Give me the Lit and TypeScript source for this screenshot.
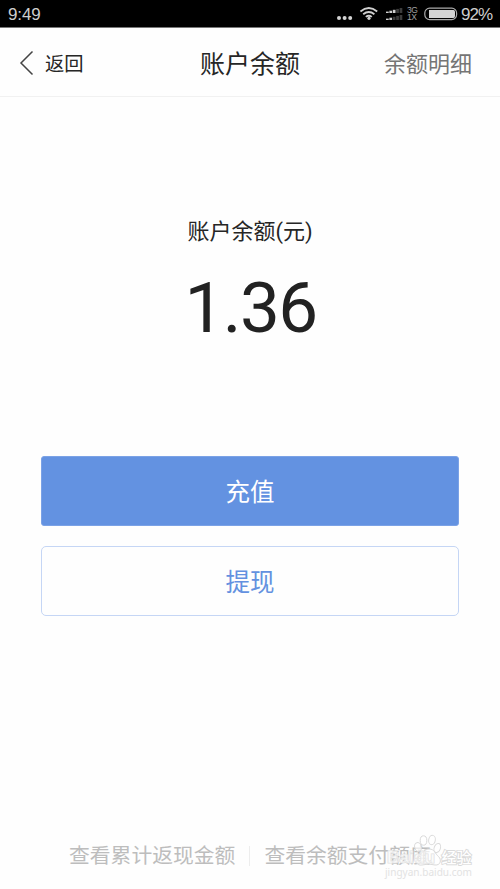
import { LitElement, html, css, svg } from "lit";
import { customElement } from "lit/decorators.js";

@customElement("status-bar")
class StatusBar extends LitElement {
  static styles = css`
    :host {
      display: block;
      height: 27px;
      background: #000;
      border-bottom: 1px solid #777;
      color: #cecece;
    }
    .row { display: flex; align-items: center; height: 28px; padding: 0 8px; }
    .time { font: 17px/28px "Liberation Sans", sans-serif; letter-spacing: -0.1px; flex: 1; position: relative; top: 1px; }
    svg { display: block; flex: none; }
    .pct { font: 17px/28px "Liberation Sans", sans-serif; letter-spacing: -0.9px; width: 31px; margin-left: 3px; white-space: nowrap; position: relative; top: 1px; }
    .net { display: flex; flex-direction: column; font: 8.5px/7px "Liberation Sans", sans-serif; letter-spacing: -0.4px; width: 11px; margin: 0 6px 0 3px; color: #a0a0a0; }
  `;
  render() {
    const bars = (y: number, lit: number) =>
      [0, 1, 2, 3, 4].map((i) => svg`<rect x=${1 + i * 3.4} y=${y - 1.4 - i * 0.9} width="2.7" height=${1.4 + i * 0.9} fill=${i < lit ? "#d0d0d0" : "#3c3c3c"}/>`);
    return html`<div class="row">
      <span class="time">9:49</span>
      <svg width="68" height="28" viewBox="0 0 68 28">
        <g fill="#d4d4d4"><circle cx="3" cy="18" r="2"/><circle cx="8.6" cy="18" r="2"/><circle cx="14.2" cy="18" r="2"/></g>
        <path d="M24.4 11.5Q32.8 4.6 41.2 11.5M27.2 14.3Q32.8 9.8 38.4 14.3M29.8 16.9Q32.8 14.6 35.8 16.9" fill="none" stroke="#d0d0d0" stroke-width="1.8"/>
        <circle cx="33" cy="18.3" r="1.6" fill="#d4d4d4"/>
        <g transform="translate(49)">${bars(13, 3)}${bars(20, 2)}</g>
      </svg>
      <div class="net"><span>3G</span><span>1X</span></div>
      <svg width="34" height="28" viewBox="0 0 34 28">
        <rect x=".8" y="8.2" width="31.8" height="11.4" rx="4.8" fill="none" stroke="#aaa" stroke-width="1.2"/>
        <path d="M5 10H29.5Q31 10 31 11.8V16Q31 17.9 29.5 17.9H5Z" fill="#d4d4d4"/>
      </svg>
      <span class="pct">92%</span>
    </div>`;
  }
}

@customElement("site-mark")
class SiteMark extends LitElement {
  static styles = css`
    :host { display: block; width: 94px; height: 52px; }
    svg { display: block; }
    text { paint-order: stroke; }
    .brand { font: bold 17px "Liberation Sans", sans-serif; }
    .cn { font: 500 15px "Noto Sans CJK SC", sans-serif; }
    .url { font: 11.5px "Noto Sans", sans-serif; }
  `;
  render() {
    return html`<svg width="94" height="52" viewBox="0 0 94 52">
      <g fill="#fff" fill-opacity=".7" stroke="#dadada" stroke-width="1">
        <path d="M45 16C39 16 38 21 34.5 24C30.5 28 33 33 38 32Q45 30 51 32C56.5 32.5 58 27 54.5 23.5C51 21 51 16 45 16Z"/>
        <ellipse cx="34" cy="14" rx="3.3" ry="4.5" transform="rotate(-15 34 14)"/>
        <ellipse cx="39.5" cy="7.5" rx="3.3" ry="4.7"/>
        <ellipse cx="48" cy="7" rx="3.3" ry="4.7" transform="rotate(10 48 7)"/>
        <ellipse cx="53.3" cy="15" rx="3.1" ry="4.7" transform="rotate(20 53.3 15)"/>
        <text class="brand" x="3" y="30" textLength="48" lengthAdjust="spacingAndGlyphs" stroke="#e2e2e2" stroke-width="1.2" fill-opacity=".5">Baidu</text>
        <text class="cn" x="57.5" y="30" textLength="30" fill-opacity="1" stroke-width="1.8">经验</text>
      </g>
      <text class="url" x="1" y="43" textLength="87" lengthAdjust="spacingAndGlyphs" fill="#e2e2e2">jingyan.baidu.com</text>
    </svg>`;
  }
}

@customElement("app-root")
class AppRoot extends LitElement {
  static styles = css`
    :host {
      display: flex;
      flex-direction: column;
      height: 889px;
      width: 500px;
      box-sizing: border-box;
      overflow: hidden;
      position: relative;
      background: #fefefe;
      color: #262626;
      font-family: Roboto, "Noto Sans CJK SC", sans-serif;
    }
    header {
      display: grid;
      grid-template-columns: 1fr auto 1fr;
      align-items: center;
      height: 63px;
      padding: 5px 28px 0 19px;
      border-bottom: 1.5px solid #f1f1f1;
      line-height: 36px;
    }
    .back { display: flex; align-items: center; gap: 10px; font-size: 19.3px; }
    .back svg { display: block; margin-top: -3px; }
    .title { font-size: 25px; transform: translateX(4.5px); }
    .detail { font-size: 22px; color: #757575; text-align: right; }
    .balance { display: flex; flex-direction: column; align-items: center; padding-top: 119px; }
    .label { font-size: 22px; line-height: 32px; }
    .amount { font-size: 71px; line-height: 84px; margin: 18px 0 0 1px; letter-spacing: -1.6px; color: #222; }
    .actions { display: flex; flex-direction: column; gap: 20px; margin: 105.5px 41px 0; }
    button {
      height: 70px;
      padding: 4px 0 0;
      border: 1px solid #c5d6f5;
      border-radius: 5px;
      background: #fefefe;
      color: #6391e0;
      font: 24.5px/62px Roboto, "Noto Sans CJK SC", sans-serif;
    }
    .primary { background: #6392e1; border-color: #7ba2e6; color: #fff; border-radius: 3px; }
    footer {
      display: flex;
      align-items: center;
      margin: auto 0 17px 69px;
      font-size: 20.8px;
      line-height: 32px;
      color: #bdbdbd;
      white-space: nowrap;
    }
    .rule { width: 1px; height: 20px; background: #ededed; margin: 0 14px; }
    site-mark { position: absolute; right: 22px; bottom: 4px; }
  `;
  render() {
    return html`
      <status-bar></status-bar>
      <header>
        <div class="back">
          <svg width="16" height="26" viewBox="0 0 16 26" fill="none" stroke="#444" stroke-width="1.5"><path d="M13.5 1.5L2 13L13.5 24.5"/></svg>
          <span>返回</span>
        </div>
        <div class="title">账户余额</div>
        <div class="detail">余额明细</div>
      </header>
      <section class="balance">
        <div class="label">账户余额(元)</div>
        <div class="amount">1.36</div>
      </section>
      <div class="actions">
        <button class="primary">充值</button>
        <button>提现</button>
      </div>
      <footer><span>查看累计返现金额</span><i class="rule"></i><span>查看余额支付额度</span></footer>
      <site-mark></site-mark>
    `;
  }
}
